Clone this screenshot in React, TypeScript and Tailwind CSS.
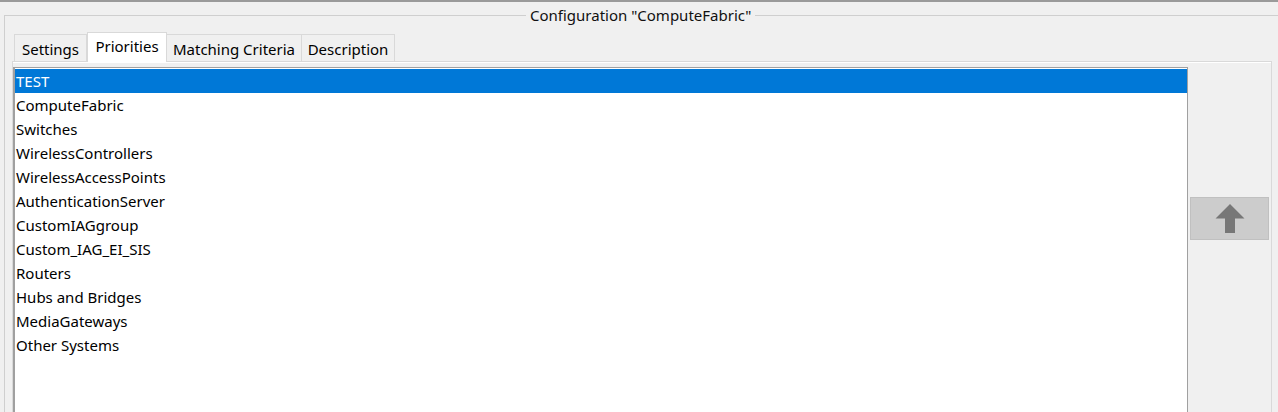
import React from "react";

const items = [
  "TEST",
  "ComputeFabric",
  "Switches",
  "WirelessControllers",
  "WirelessAccessPoints",
  "AuthenticationServer",
  "CustomIAGgroup",
  "Custom_IAG_EI_SIS",
  "Routers",
  "Hubs and Bridges",
  "MediaGateways",
  "Other Systems",
];

const tabs = ["Settings", "Priorities", "Matching Criteria", "Description"];
const tabW = [73, 80, 136, 94];

export default function App() {
  return (
    <div
      className="w-[1278px] h-[412px] overflow-hidden bg-[#f0f0f0] border-t-2 border-[#9a9a9a] text-black"
      style={{ fontFamily: '"Noto Sans", "Liberation Sans", Arial, sans-serif' }}
    >
      <fieldset className="ml-[4px] mt-[5px] w-[1280px] h-[420px] border border-[#cfcfcf] pl-[7px] pr-0 pt-0 m-0">
        <legend className="ml-[514px] px-[4px] text-[15px] leading-[16px] text-[#111]">
          Configuration "ComputeFabric"
        </legend>
        <div className="flex items-end h-[38px] ml-[2px]">
          {tabs.map((t, i) => {
            const sel = i === 1;
            return (
              <div
                key={t}
                style={{ width: tabW[i] }}
                className={
                  sel
                    ? "h-[30px] bg-white border border-b-0 border-[#d9d9d9] flex justify-center pt-[4px] text-[15px] leading-[18px] -mb-px relative z-10"
                    : "h-[27px] bg-[#f0f0f0] border border-b-0 border-[#d9d9d9] -ml-px first:ml-0 flex justify-center pt-[5px] text-[15px] leading-[18px]"
                }
              >
                {t}
              </div>
            );
          })}
        </div>
        <div className="w-[1260px] h-[400px] border border-[#d9d9d9] bg-[#f0f0f0] flex">
          <div className="flex-1 border-t border-white flex pt-[4px]">
            <div className="w-[1175px] h-[400px] bg-white border-l-2 border-t border-r border-l-[#a0a0a0] border-t-[#a0a0a0] border-r-[#a0a0a0] pt-px">
              {items.map((it, i) => (
                <div
                  key={it}
                  className={
                    i === 0
                      ? "h-[24px] bg-[#0078d7] text-white text-[15px] leading-[24px] pl-[1px]"
                      : "h-[24px] text-[15px] leading-[24px] pl-[1px]"
                  }
                >
                  {it}
                </div>
              ))}
            </div>
            <div className="flex-1 px-[2px] pt-[130px]">
              <div className="h-[43px] bg-[#cccccc] border border-[#c0c0c0] flex items-center justify-center">
                <svg width="30" height="30" viewBox="0 0 30 30">
                  <path d="M15 0 L29.5 14.5 L20 14.5 L20 29 L10 29 L10 14.5 L0.5 14.5 Z" fill="#777777" />
                </svg>
              </div>
            </div>
          </div>
        </div>
      </fieldset>
    </div>
  );
}
